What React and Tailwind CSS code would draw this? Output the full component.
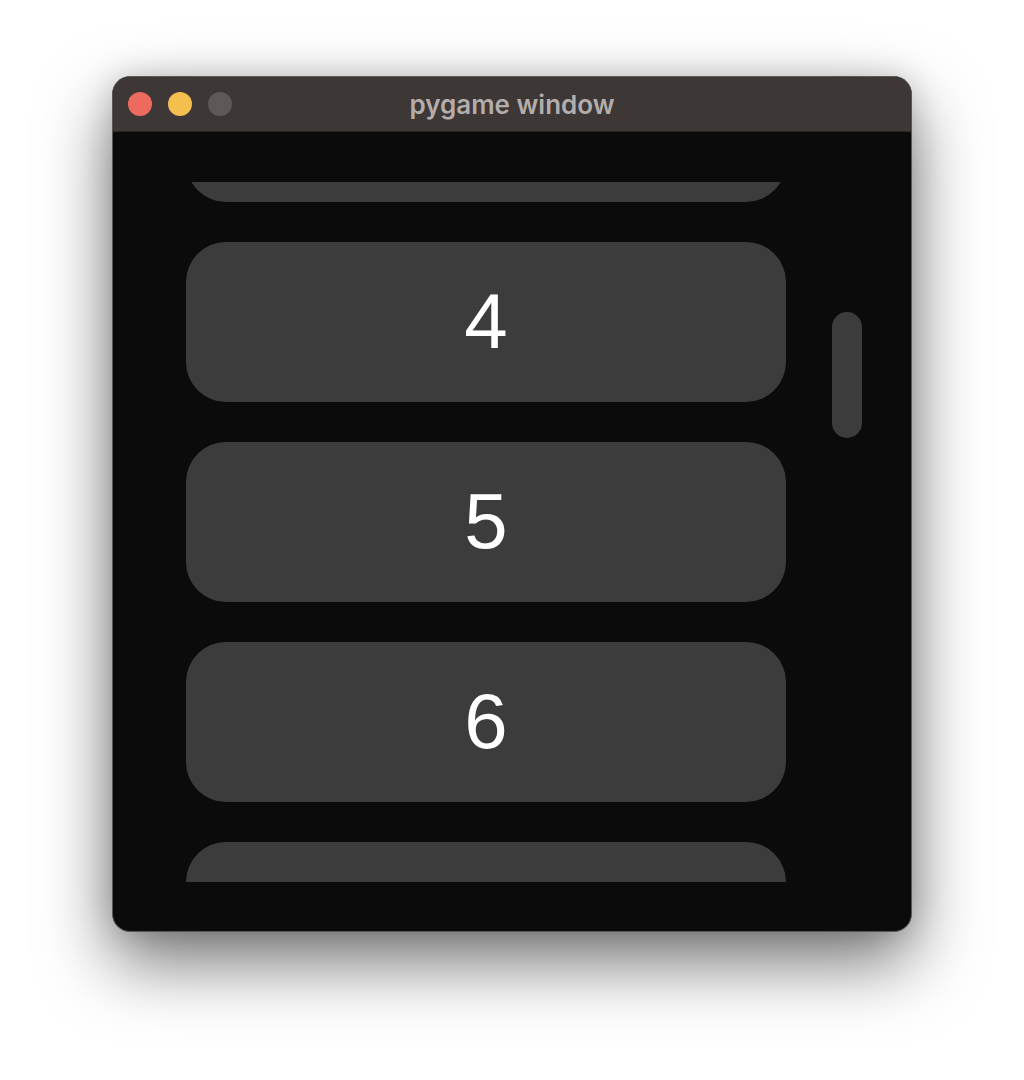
import React from "react";

function Item({ label }) {
  return (
    <div className="h-[160px] w-[600px] shrink-0 rounded-[40px] bg-[#3c3c3c] flex items-center justify-center">
      {label !== undefined && (
        <span
          className="text-white text-[78px] leading-none -mt-[2px]"
          style={{ fontFamily: '"Liberation Sans", Arial, sans-serif' }}
        >
          {label}
        </span>
      )}
    </div>
  );
}

export default function App() {
  return (
    <div className="w-[1024px] h-[1080px] bg-white pt-[76px] pl-[112px]">
      <div className="w-[800px] h-[856px] rounded-[18px] overflow-hidden border border-[#5c5757] shadow-[0_30px_70px_rgba(0,0,0,0.55),0_0_30px_rgba(0,0,0,0.15)] flex flex-col bg-[#0b0b0b]">
        <div className="h-[55px] shrink-0 bg-[#3d3736] relative flex items-center border-b border-[#2a2626]">
          <div className="flex items-center gap-[16px] pl-[15px]">
            <div className="w-[24px] h-[24px] rounded-full bg-[#ed6a5e]" />
            <div className="w-[24px] h-[24px] rounded-full bg-[#f5bf4f]" />
            <div className="w-[24px] h-[24px] rounded-full bg-[#5e5959]" />
          </div>
          <div
            className="absolute inset-0 flex items-center justify-center text-[#b3adac] text-[26px] font-semibold"
            style={{ fontFamily: 'Inter, "Liberation Sans", sans-serif' }}
          >
            pygame window
          </div>
        </div>
        <div className="flex-1 flex pt-[50px] pl-[73px] gap-[46px]">
          <div className="w-[600px] h-[700px] overflow-hidden">
            <div className="flex flex-col gap-[40px] -mt-[140px]">
              <Item />
              <Item label="4" />
              <Item label="5" />
              <Item label="6" />
              <Item />
            </div>
          </div>
          <div className="mt-[130px] w-[30px] h-[126px] rounded-[15px] bg-[#3c3c3c]" />
        </div>
      </div>
    </div>
  );
}
